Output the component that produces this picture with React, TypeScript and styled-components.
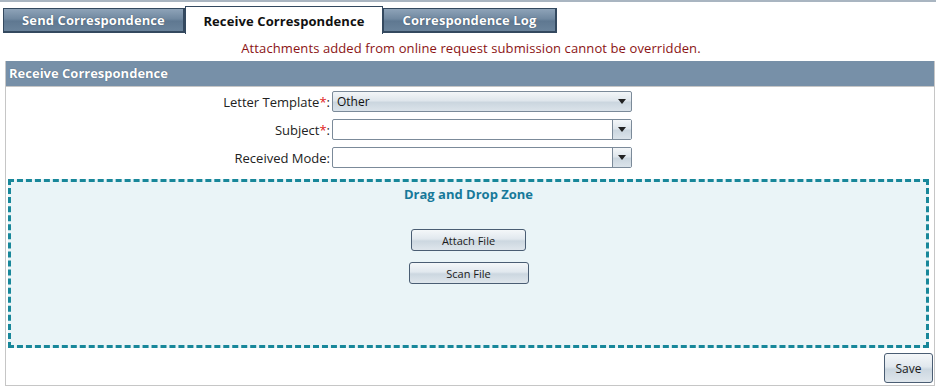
import { Fragment } from 'react';
import styled, { createGlobalStyle } from 'styled-components';

const GlobalStyle = createGlobalStyle`
  html, body {
    margin: 0;
    padding: 0;
    background: #ffffff;
    font-family: "Open Sans", "Noto Sans", sans-serif;
  }
`;

const Page = styled.div`
  width: 936px;
  height: 392px;
  border-top: 2px solid #a9b5c1;
  box-sizing: border-box;
  overflow: hidden;
`;

const TabBar = styled.div`
  display: flex;
  align-items: flex-end;
  padding: 3px 0 0 3px;
  height: 31px;
  box-sizing: border-box;
`;

const Tab = styled.div<{ $active?: boolean; $width: number }>`
  display: flex;
  align-items: center;
  justify-content: center;
  box-sizing: border-box;
  font-weight: 700;
  font-size: 13px;
  letter-spacing: 0.1px;
  height: ${(p) => (p.$active ? '28px' : '25px')};
  width: ${(p) => p.$width}px;
  border: 1px solid #34495f;
  border-bottom-width: ${(p) => (p.$active ? '0' : '2px')};
  border-right-width: ${(p) => (p.$active ? '1px' : '2px')};
  margin-bottom: ${(p) => (p.$active ? '-1px' : '0')};
  color: ${(p) => (p.$active ? '#111' : '#fff')};
  background: ${(p) =>
    p.$active
      ? '#fff'
      : 'linear-gradient(to bottom, #8ea3b8 0%, #7088a0 45%, #5f7891 55%, #6a839b 100%)'};
  text-shadow: ${(p) => (p.$active ? 'none' : '0 0 1px #2b3d52')};
`;

const Notice = styled.div`
  text-align: center;
  color: #8b1414;
  font-size: 13px;
  letter-spacing: 0.1px;
  padding: 6px 0 0 6px;
  height: 28px;
  box-sizing: border-box;
`;

const Panel = styled.div`
  margin: 0 1px 0 5px;
  border: 1px solid #c6c6c6;
  border-top: none;
  height: 325px;
  box-sizing: border-box;
  display: flex;
  flex-direction: column;
`;

const PanelHeader = styled.div`
  background: #7790a8;
  color: #fff;
  font-weight: 700;
  font-size: 13px;
  height: 25px;
  line-height: 25px;
  padding-left: 3px;
  border-bottom: 1px solid #c6c6c6;
  text-shadow: 0 0 1px #3d5066;
`;

const Form = styled.div`
  display: grid;
  grid-template-columns: 326px 300px;
  row-gap: 7px;
  padding-top: 4px;
  align-items: center;
`;

const Label = styled.div`
  text-align: right;
  font-size: 13px;
  color: #222;
  padding-right: 2px;
`;

const Star = styled.span`
  color: #e02020;
`;

const Select = styled.div<{ $filled?: boolean }>`
  height: 21px;
  box-sizing: border-box;
  border: 1px solid #7b8a99;
  border-radius: 2px;
  display: flex;
  align-items: center;
  font-size: 12px;
  color: #111;
  background: ${(p) =>
    p.$filled
      ? 'linear-gradient(to bottom, #f3f6f8 0%, #dfe6ec 45%, #cbd6df 55%, #dbe3ea 100%)'
      : '#fff'};
`;

const SelectText = styled.div`
  flex: 1;
  padding-left: 4px;
`;

const Arrow = styled.div<{ $split?: boolean }>`
  width: 19px;
  height: 100%;
  display: flex;
  align-items: center;
  justify-content: center;
  box-sizing: border-box;
  border-left: ${(p) => (p.$split ? '1px solid #7b8a99' : 'none')};
  background: ${(p) =>
    p.$split
      ? 'linear-gradient(to bottom, #f3f6f8 0%, #dfe6ec 45%, #cbd6df 55%, #dbe3ea 100%)'
      : 'transparent'};
  &::after {
    content: '';
    border-left: 4px solid transparent;
    border-right: 4px solid transparent;
    border-top: 5px solid #222;
  }
`;

const DropZone = styled.div`
  margin: 11px 5px 0 2px;
  height: 169px;
  box-sizing: border-box;
  border: 3px dashed #18879a;
  background: #eaf4f7;
  display: flex;
  flex-direction: column;
  align-items: center;
`;

const DropTitle = styled.div`
  color: #17799a;
  font-weight: 700;
  font-size: 13px;
  margin-top: 3px;
`;

const Buttons = styled.div`
  display: flex;
  flex-direction: column;
  align-items: center;
  gap: 11px;
  margin-top: 26px;
`;

const Button = styled.button<{ $w: number; $h?: number; $size?: number }>`
  width: ${(p) => p.$w}px;
  height: ${(p) => p.$h ?? 22}px;
  border: 1px solid #4a5d73;
  border-radius: 3px;
  font-family: inherit;
  font-size: ${(p) => p.$size ?? 11}px;
  color: #1a1a1a;
  padding: 0;
  background: linear-gradient(to bottom, #f4f7f9 0%, #e1e8ee 45%, #ccd7e0 55%, #dfe6ec 100%);
`;

const Footer = styled.div`
  display: flex;
  justify-content: flex-end;
  padding: 5px 1px 0 0;
`;

export default function App() {
  const fields = [
    { label: 'Letter Template', required: true, value: 'Other', filled: true },
    { label: 'Subject', required: true, value: '', filled: false },
    { label: 'Received Mode', required: false, value: '', filled: false },
  ];

  return (
    <Page>
      <GlobalStyle />
      <TabBar>
        <Tab $width={182}>Send Correspondence</Tab>
        <Tab $active $width={198}>Receive Correspondence</Tab>
        <Tab $width={174}>Correspondence Log</Tab>
      </TabBar>
      <Notice>Attachments added from online request submission cannot be overridden.</Notice>
      <Panel>
        <PanelHeader>Receive Correspondence</PanelHeader>
        <Form>
          {fields.map((f) => (
            <Fragment key={f.label}>
              <Label>
                {f.label}
                {f.required && <Star>*</Star>}:
              </Label>
              <Select $filled={f.filled}>
                <SelectText>{f.value}</SelectText>
                <Arrow $split={!f.filled} />
              </Select>
            </Fragment>
          ))}
        </Form>
        <DropZone>
          <DropTitle>Drag and Drop Zone</DropTitle>
          <Buttons>
            <Button $w={115}>Attach File</Button>
            <Button $w={120}>Scan File</Button>
          </Buttons>
        </DropZone>
        <Footer>
          <Button $w={49} $h={30} $size={12}>Save</Button>
        </Footer>
      </Panel>
    </Page>
  );
}
